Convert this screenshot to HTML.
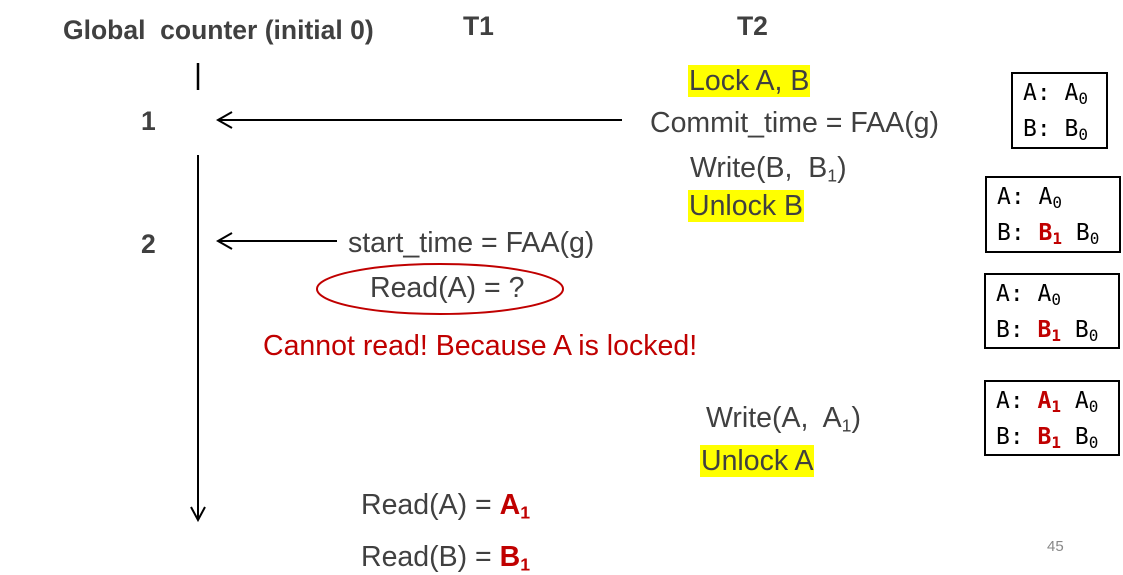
<!DOCTYPE html>
<html><head><style>
body{margin:0;width:1123px;height:575px;background:#fff;position:relative;overflow:hidden;font-family:"Liberation Sans",Arial,sans-serif;color:#404040}
.t{position:absolute;white-space:nowrap;font-size:28.5px;line-height:33px}
.b{font-weight:bold;font-size:26.5px}
.hl{background:#ffff00;padding:0 1px}
.r{color:#c00000}
.rb{color:#c00000;font-weight:bold}
sub{font-size:0.62em;vertical-align:-0.25em;line-height:0}
.box{position:absolute;border:2px solid #000;font-family:"DejaVu Sans Mono","Liberation Mono",monospace;font-size:23px;color:#000;line-height:36px;padding:1px 0 0 10px;box-sizing:border-box}
.box sub{font-size:16px}
</style></head><body>
<div class="t b" style="left:63px;top:14px">Global&nbsp; counter (initial 0)</div>
<div class="t b" style="left:463px;top:10px">T1</div>
<div class="t b" style="left:737px;top:10px">T2</div>
<div class="t b" style="left:141px;top:105px">1</div>
<div class="t b" style="left:141px;top:228px">2</div>
<svg width="1123" height="575" style="position:absolute;left:0;top:0">
<line x1="198" y1="63" x2="198" y2="90" stroke="#000" stroke-width="2.5"/>
<line x1="198" y1="155" x2="198" y2="518" stroke="#000" stroke-width="2"/>
<polyline points="191,507 198,520 205,507" fill="none" stroke="#000" stroke-width="2"/>
<line x1="218" y1="120" x2="622" y2="120" stroke="#000" stroke-width="2"/>
<polyline points="232,112 218,120 232,128" fill="none" stroke="#000" stroke-width="2"/>
<line x1="218" y1="241" x2="337" y2="241" stroke="#000" stroke-width="2"/>
<polyline points="232,233 218,241 232,249" fill="none" stroke="#000" stroke-width="2"/>
<ellipse cx="440" cy="289" rx="123" ry="25" fill="none" stroke="#c00000" stroke-width="2"/>
</svg>
<div class="t" style="left:688px;top:65px"><span class="hl">Lock A, B</span></div>
<div class="t" style="left:650px;top:107px">Commit_time = FAA(g)</div>
<div class="t" style="left:690px;top:152px">Write(B,&nbsp; B<sub>1</sub>)</div>
<div class="t" style="left:688px;top:190px"><span class="hl">Unlock B</span></div>
<div class="t" style="left:348px;top:227px">start_time = FAA(g)</div>
<div class="t" style="left:370px;top:272px">Read(A) = ?</div>
<div class="t r" style="left:263px;top:330px">Cannot read! Because A is locked!</div>
<div class="t" style="left:706px;top:402px">Write(A,&nbsp; A<sub>1</sub>)</div>
<div class="t" style="left:700px;top:445px"><span class="hl">Unlock A</span></div>
<div class="t" style="left:361px;top:489px">Read(A) = <span class="rb">A<sub>1</sub></span></div>
<div class="t" style="left:361px;top:541px">Read(B) = <span class="rb">B<sub>1</sub></span></div>
<div class="t" style="left:1047px;top:530px;font-size:15px;color:#888">45</div>
<div class="box" style="left:1011px;top:72px;width:97px;height:77px">A: A<sub>0</sub><br>B: B<sub>0</sub></div>
<div class="box" style="left:985px;top:176px;width:136px;height:77px">A: A<sub>0</sub><br>B: <span class="rb">B<sub>1</sub></span> B<sub>0</sub></div>
<div class="box" style="left:984px;top:273px;width:136px;height:76px">A: A<sub>0</sub><br>B: <span class="rb">B<sub>1</sub></span> B<sub>0</sub></div>
<div class="box" style="left:984px;top:380px;width:136px;height:76px">A: <span class="rb">A<sub>1</sub></span> A<sub>0</sub><br>B: <span class="rb">B<sub>1</sub></span> B<sub>0</sub></div>
</body></html>
